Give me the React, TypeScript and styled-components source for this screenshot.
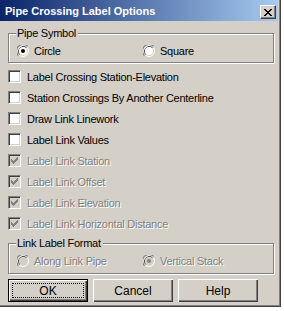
import React from 'react';
import styled, { createGlobalStyle } from 'styled-components';

const GlobalStyle = createGlobalStyle`
  html, body {
    margin: 0;
    padding: 0;
    background: #ffffff;
  }
`

const Dialog = styled.div`
  width: 281px;
  height: 307px;
  box-sizing: border-box;
  background: #d4d0c8;
  border-right: 1px solid #404040;
  border-bottom: 1px solid #404040;
  box-shadow: inset -1px -1px 0 #808080;
  display: flex;
  flex-direction: column;
  font-family: 'Liberation Sans', Arial, sans-serif;
  font-size: 11px;
  letter-spacing: -0.25px;
  color: #000;
`

const TitleBar = styled.div`
  height: 21px;
  margin-right: 2px;
  background: linear-gradient(to right, #0a246a, #a6caf0);
  display: flex;
  align-items: center;
  justify-content: space-between;
  padding: 0 2px 0 5px;
`

const Title = styled.span`
  color: #fff;
  font-weight: bold;
  font-size: 11px;
  letter-spacing: 0;
`

const CloseButton = styled.div`
  width: 16px;
  height: 14px;
  box-sizing: border-box;
  margin-top: 3px;
  background: #d4d0c8;
  border-top: 1px solid #fff;
  border-left: 1px solid #fff;
  border-right: 1px solid #404040;
  border-bottom: 1px solid #404040;
  box-shadow: inset -1px -1px 0 #808080;
  display: flex;
  align-items: center;
  justify-content: center;
`

const Body = styled.div`
  padding: 0 6px 0 8px;
  display: flex;
  flex-direction: column;
`

const GroupBox = styled.div<{ $top: number; $height: number }>`
  position: relative;
  margin-top: ${p => p.$top}px;
  height: ${p => p.$height}px;
  box-sizing: border-box;
  border: 1px solid #808080;
  box-shadow: inset 1px 1px 0 #fff, 1px 1px 0 #fff;
  display: grid;
  grid-template-columns: 126px 1fr;
  align-items: start;
  padding: 11px 0 0 8px;
`

const Caption = styled.span`
  position: absolute;
  top: -7px;
  left: 7px;
  padding: 0 2px 0 1px;
  background: #d4d0c8;
  line-height: 13px;
`

const Option = styled.div<{ $disabled?: boolean }>`
  display: flex;
  align-items: center;
  gap: 5px;
  height: 12px;
  color: ${p => (p.$disabled ? '#808080' : '#000')};
  text-shadow: ${p => (p.$disabled ? '1px 1px 0 #fff' : 'none')};
  white-space: nowrap;
`

const CheckList = styled.div`
  margin-top: 7px;
  display: flex;
  flex-direction: column;
  gap: 8px;
`

const CheckRow = styled.div<{ $disabled?: boolean }>`
  display: flex;
  align-items: center;
  gap: 6px;
  height: 13px;
  color: ${p => (p.$disabled ? '#808080' : '#000')};
  text-shadow: ${p => (p.$disabled ? '1px 1px 0 #fff' : 'none')};
  white-space: nowrap;
`

const Box = styled.span<{ $disabled?: boolean }>`
  width: 13px;
  height: 13px;
  flex: none;
  box-sizing: border-box;
  background: ${p => (p.$disabled ? '#d4d0c8' : '#fff')};
  border-top: 1px solid #808080;
  border-left: 1px solid #808080;
  border-right: 1px solid #fff;
  border-bottom: 1px solid #fff;
  box-shadow: inset 1px 1px 0 #404040, inset -1px -1px 0 #d4d0c8;
  display: flex;
  align-items: center;
  justify-content: center;
  text-shadow: none;
`

const ButtonRow = styled.div`
  margin-top: 5px;
  display: flex;
  gap: 5px;
`

const Button = styled.div<{ $default?: boolean }>`
  width: 80px;
  height: 23px;
  box-sizing: border-box;
  position: relative;
  background: #d4d0c8;
  border: ${p => (p.$default ? '1px solid #000' : 'none')};
  box-shadow: inset 1px 1px 0 #fff, inset -1px -1px 0 #404040, inset -2px -2px 0 #808080;
  display: flex;
  align-items: center;
  justify-content: center;
  font-size: 12px;
  letter-spacing: 0;
`

const FocusRing = styled.span`
  position: absolute;
  inset: 3px;
  border: 1px dotted #000;
`

function CheckMark({ color }: { color: string }) {
  return (
    <svg width="7" height="7" viewBox="0 0 7 7" shapeRendering="crispEdges">
      <path
        d="M0 2h1v3h-1z M1 3h1v3h-1z M2 4h1v3h-1z M3 3h1v3h-1z M4 2h1v3h-1z M5 1h1v3h-1z M6 0h1v3h-1z"
        fill={color}
      />
    </svg>
  );
}

function Radio({ checked, disabled }: { checked?: boolean; disabled?: boolean }) {
  const fill = disabled ? '#d4d0c8' : '#fff';
  const dot = disabled ? '#808080' : '#000';
  return (
    <svg width="12" height="12" viewBox="0 0 12 12" style={{ flex: 'none' }}>
      <circle cx="6" cy="6" r="5.5" fill="none" stroke="#fff" strokeWidth="1" />
      <path d="M10.6 1.4A6 6 0 0 0 1.4 10.6" fill="none" stroke="#808080" strokeWidth="1.2" />
      <path d="M9.5 2.5A5 5 0 0 0 2.5 9.5" fill="none" stroke="#404040" strokeWidth="1" />
      <circle cx="6" cy="6" r="4" fill={fill} />
      {checked && <circle cx="6" cy="6" r="2" fill={dot} />}
    </svg>
  );
}

const checks: { label: string; checked?: boolean; disabled?: boolean }[] = [
  { label: 'Label Crossing Station-Elevation' },
  { label: 'Station Crossings By Another Centerline' },
  { label: 'Draw Link Linework' },
  { label: 'Label Link Values' },
  { label: 'Label Link Station', checked: true, disabled: true },
  { label: 'Label Link Offset', checked: true, disabled: true },
  { label: 'Label Link Elevation', checked: true, disabled: true },
  { label: 'Label Link Horizontal Distance', checked: true, disabled: true },
];

export default function App() {
  return (
    <>
      <GlobalStyle />
      <Dialog>
        <TitleBar>
          <Title>Pipe Crossing Label Options</Title>
          <CloseButton>
            <svg width="8" height="7" viewBox="0 0 8 7" shapeRendering="crispEdges">
              <path d="M0 0h2l2 2.5 2-2.5h2l-3 3.5 3 3.5h-2l-2-2.5-2 2.5h-2l3-3.5z" fill="#000" />
            </svg>
          </CloseButton>
        </TitleBar>
        <Body>
          <GroupBox $top={12} $height={30}>
            <Caption>Pipe Symbol</Caption>
            <Option>
              <Radio checked />
              Circle
            </Option>
            <Option>
              <Radio />
              Square
            </Option>
          </GroupBox>
          <CheckList>
            {checks.map(c => (
              <CheckRow key={c.label} $disabled={c.disabled}>
                <Box $disabled={c.disabled}>
                  {c.checked && <CheckMark color={c.disabled ? '#808080' : '#000'} />}
                </Box>
                {c.label}
              </CheckRow>
            ))}
          </CheckList>
          <GroupBox $top={13} $height={31}>
            <Caption>Link Label Format</Caption>
            <Option $disabled>
              <Radio disabled />
              Along Link Pipe
            </Option>
            <Option $disabled>
              <Radio checked disabled />
              Vertical Stack
            </Option>
          </GroupBox>
          <ButtonRow>
            <Button $default>
              <FocusRing />
              OK
            </Button>
            <Button>Cancel</Button>
            <Button>Help</Button>
          </ButtonRow>
        </Body>
      </Dialog>
    </>
  );
}
